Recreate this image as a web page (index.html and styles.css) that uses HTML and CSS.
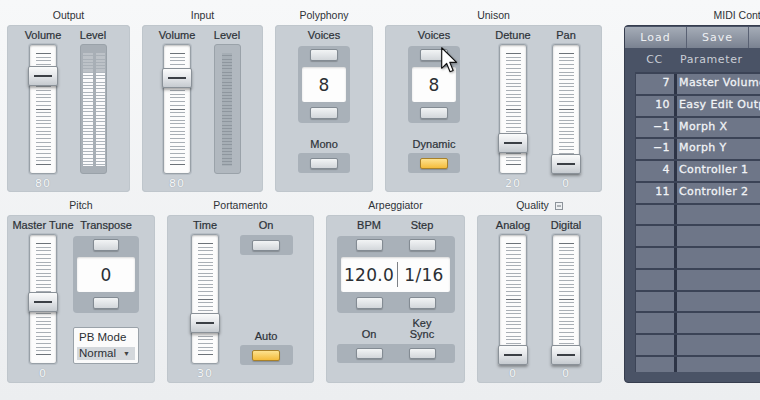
FILE: index.html
```html
<!DOCTYPE html>
<html>
<head>
<meta charset="utf-8">
<link rel="stylesheet" href="styles.css">
</head>
<body>
<div class="app">
  <div class="left">
    <div class="row row-top">
      <section class="sec s-output">
        <h2 class="title">Output</h2>
        <div class="panel p-output">
          <div class="col">
            <div class="lbl">Volume</div>
            <div class="fader"><div class="thumb" style="top:21px"></div></div>
            <div class="val">80</div>
          </div>
          <div class="col">
            <div class="lbl">Level</div>
            <div class="meter meter-out"><div class="mcol"></div><div class="mcol mcol2"></div></div>
          </div>
        </div>
      </section>
      <section class="sec s-input">
        <h2 class="title">Input</h2>
        <div class="panel p-input">
          <div class="col">
            <div class="lbl">Volume</div>
            <div class="fader"><div class="thumb" style="top:23px"></div></div>
            <div class="val">80</div>
          </div>
          <div class="col">
            <div class="lbl">Level</div>
            <div class="meter meter-in"><div class="mcol"></div></div>
          </div>
        </div>
      </section>
      <section class="sec s-poly">
        <h2 class="title">Polyphony</h2>
        <div class="panel p-center">
          <div class="lbl">Voices</div>
          <div class="spin">
            <div class="btn"></div>
            <div class="disp">8</div>
            <div class="btn"></div>
          </div>
          <div class="lbl lbl-gap">Mono</div>
          <div class="grp"><div class="btn btn-s"></div></div>
        </div>
      </section>
      <section class="sec s-unison">
        <h2 class="title">Unison</h2>
        <div class="panel p-unison">
          <div class="col col-60">
            <div class="lbl">Voices</div>
            <div class="spin">
              <div class="btn"></div>
              <div class="disp">8</div>
              <div class="btn"></div>
            </div>
            <div class="lbl lbl-gap">Dynamic</div>
            <div class="grp"><div class="btn btn-s yel"></div></div>
          </div>
          <div class="col ml27">
            <div class="lbl">Detune</div>
            <div class="fader"><div class="thumb" style="top:88px"></div></div>
            <div class="val">20</div>
          </div>
          <div class="col ml9">
            <div class="lbl">Pan</div>
            <div class="fader"><div class="thumb" style="top:109px"></div></div>
            <div class="val">0</div>
          </div>
          <svg class="cursor" width="17" height="27" viewBox="0 0 12 19">
            <path d="M0.5 0.5 L0.5 15 L4 11.6 L6.4 17.4 L8.6 16.5 L6.2 10.8 L11 10.8 Z" fill="#fff" stroke="#111" stroke-width="0.8" stroke-linejoin="round"/>
          </svg>
        </div>
      </section>
    </div>

    <div class="row row-bottom">
      <section class="sec s-pitch">
        <h2 class="title">Pitch</h2>
        <div class="panel p-pitch">
          <div class="col col-60">
            <div class="lbl">Master Tune</div>
            <div class="fader"><div class="thumb" style="top:57px"></div></div>
            <div class="val">0</div>
          </div>
          <div class="col col-66">
            <div class="lbl">Transpose</div>
            <div class="spin spin-66">
              <div class="btn"></div>
              <div class="disp">0</div>
              <div class="btn"></div>
            </div>
            <div class="pb">
              <div class="pb-title">PB Mode</div>
              <div class="pb-sel"><span>Normal</span><span class="tri">&#9660;</span></div>
            </div>
          </div>
        </div>
      </section>
      <section class="sec s-porta">
        <h2 class="title">Portamento</h2>
        <div class="panel p-porta">
          <div class="col">
            <div class="lbl">Time</div>
            <div class="fader"><div class="thumb" style="top:78px"></div></div>
            <div class="val">30</div>
          </div>
          <div class="col col-60 ml9">
            <div class="lbl">On</div>
            <div class="grp grp-on"><div class="btn btn-s"></div></div>
            <div class="lbl lbl-auto">Auto</div>
            <div class="grp"><div class="btn btn-s yel"></div></div>
          </div>
        </div>
      </section>
      <section class="sec s-arp">
        <h2 class="title">Arpeggiator</h2>
        <div class="panel p-center">
          <div class="pair">
            <div class="lbl">BPM</div>
            <div class="lbl">Step</div>
          </div>
          <div class="spin spin-arp">
            <div class="pair pair-btn"><div class="btn"></div><div class="btn"></div></div>
            <div class="disp disp-arp"><span class="half">120.0</span><span class="div"></span><span class="half">1/16</span></div>
            <div class="pair pair-btn"><div class="btn"></div><div class="btn"></div></div>
          </div>
          <div class="pair pair-lbl2">
            <div class="lbl2">On</div>
            <div class="lbl2">Key<br>Sync</div>
          </div>
          <div class="grp grp-arp">
            <div class="btn btn-s"></div>
            <div class="btn btn-s"></div>
          </div>
        </div>
      </section>
      <section class="sec s-quality">
        <h2 class="title title-q">Quality
          <svg class="qicon" width="8" height="8" viewBox="0 0 8 8"><rect x="0.5" y="0.5" width="7" height="7" fill="#eef0f2" stroke="#8c939a"/><line x1="2" y1="4" x2="6" y2="4" stroke="#6d747b"/></svg>
        </h2>
        <div class="panel p-quality">
          <div class="col">
            <div class="lbl">Analog</div>
            <div class="fader"><div class="thumb" style="top:110px"></div></div>
            <div class="val">0</div>
          </div>
          <div class="col ml9">
            <div class="lbl">Digital</div>
            <div class="fader"><div class="thumb" style="top:110px"></div></div>
            <div class="val">0</div>
          </div>
        </div>
      </section>
    </div>
  </div>

  <section class="sec s-midi">
    <h2 class="title">MIDI Control</h2>
    <div class="midi-panel">
      <div class="mbar">
        <div class="mbtn">Load</div>
        <div class="mbtn">Save</div>
        <div class="mbtn"></div>
        <div class="mbtn"></div>
      </div>
      <div class="mhead">
        <div class="mh-cc">CC</div>
        <div class="mh-par">Parameter</div>
      </div>
      <div class="mtable">
        <div class="mrow"><div class="mcc">7</div><div class="mdiv"></div><div class="mpar">Master Volume</div></div>
        <div class="mrow"><div class="mcc">10</div><div class="mdiv"></div><div class="mpar">Easy Edit Output</div></div>
        <div class="mrow"><div class="mcc">&minus;1</div><div class="mdiv"></div><div class="mpar">Morph X</div></div>
        <div class="mrow"><div class="mcc">&minus;1</div><div class="mdiv"></div><div class="mpar">Morph Y</div></div>
        <div class="mrow"><div class="mcc">4</div><div class="mdiv"></div><div class="mpar">Controller 1</div></div>
        <div class="mrow"><div class="mcc">11</div><div class="mdiv"></div><div class="mpar">Controller 2</div></div>
        <div class="mrow"><div class="mcc"></div><div class="mdiv"></div><div class="mpar"></div></div>
        <div class="mrow"><div class="mcc"></div><div class="mdiv"></div><div class="mpar"></div></div>
        <div class="mrow"><div class="mcc"></div><div class="mdiv"></div><div class="mpar"></div></div>
        <div class="mrow"><div class="mcc"></div><div class="mdiv"></div><div class="mpar"></div></div>
        <div class="mrow"><div class="mcc"></div><div class="mdiv"></div><div class="mpar"></div></div>
        <div class="mrow"><div class="mcc"></div><div class="mdiv"></div><div class="mpar"></div></div>
        <div class="mrow"><div class="mcc"></div><div class="mdiv"></div><div class="mpar"></div></div>
        <div class="mrow"><div class="mcc"></div><div class="mdiv"></div><div class="mpar"></div></div>
      </div>
    </div>
  </section>
</div>
</body>
</html>
```

FILE: styles.css
```css
* { box-sizing: border-box; }
html, body { margin: 0; padding: 0; }
body {
  width: 760px;
  height: 400px;
  overflow: hidden;
  background: linear-gradient(#f7f8f9, #eceef0);
  font-family: "Liberation Sans", Arial, sans-serif;
  color: #30353b;
}
.app {
  display: flex;
  gap: 22px;
  padding: 5px 0 0 7px;
  width: 1000px;
}
.left {
  display: flex;
  flex-direction: column;
  gap: 4px;
  width: 595px;
  flex: none;
}
.row { display: flex; gap: 12px; }
.sec { display: flex; flex-direction: column; flex: none; }
.title {
  margin: 0;
  font-weight: normal;
  font-size: 10.5px;
  text-align: center;
  color: #2e3237;
  height: 20px;
  line-height: 20px;
  white-space: nowrap;
}
.row-bottom .title { height: 19px; line-height: 19px; }
.title-q { display: flex; justify-content: center; align-items: center; gap: 6px; }
.qicon { display: block; }

.panel {
  background: #c8ced4;
  border-radius: 4px;
  padding-top: 3px;
  display: flex;
  position: relative;
  box-shadow: inset 0 0 0 1px #bfc6cc;
}
.row-top .panel { height: 167px; }
.row-bottom .panel { height: 168px; }

.s-output { width: 123px; }
.s-input { width: 121px; }
.s-poly { width: 98px; }
.s-unison { width: 217px; }
.s-pitch { width: 148px; }
.s-porta { width: 147px; }
.s-arp { width: 139px; }
.s-quality { width: 125px; }

.p-output { padding-left: 14px; gap: 6px; }
.p-input { padding-left: 13px; gap: 6px; }
.p-center { flex-direction: column; align-items: center; }
.p-unison { padding-left: 19px; }
.p-pitch { padding-left: 6px; }
.p-porta { padding-left: 16px; }
.p-quality { padding-left: 14px; }

.col {
  display: flex;
  flex-direction: column;
  align-items: center;
  width: 44px;
  flex: none;
}
.col-60 { width: 60px; }
.col-66 { width: 66px; }
.ml27 { margin-left: 27px; }
.ml9 { margin-left: 9px; }

.lbl {
  height: 14px;
  line-height: 14px;
  font-size: 11px;
  white-space: nowrap;
  color: #2d3238;
  -webkit-text-stroke: 0.2px #2d3238;
}
.lbl-gap { margin-top: 14px; }
.lbl-auto { margin-top: 74px; }

/* faders */
.fader {
  margin-top: 2px;
  width: 28px;
  height: 130px;
  position: relative;
  background: #fcfcfc;
  border: 1px solid #98a0a7;
  border-radius: 3px;
  box-shadow: inset 0 1px 2px rgba(0,0,0,.25), 0 0 0 1px #b7bec5;
}
.fader::before {
  content: "";
  position: absolute;
  left: 6px;
  width: 15px;
  top: 8px;
  height: 112px;
  background: repeating-linear-gradient(to bottom, #a9afb5 0 1px, transparent 1px 3.7px);
}
.fader::after {
  content: "";
  position: absolute;
  left: 6px;
  width: 15px;
  top: 8px;
  height: 112px;
  background:
    linear-gradient(#6c7278, #6c7278) 0 0 / 100% 1px no-repeat,
    linear-gradient(#6c7278, #6c7278) 0 55.5px / 100% 1px no-repeat,
    linear-gradient(#6c7278, #6c7278) 0 111px / 100% 1px no-repeat;
}
.thumb {
  position: absolute;
  left: -2px;
  width: 30px;
  height: 20px;
  border: 1px solid #8a9198;
  border-radius: 2px;
  background: linear-gradient(#fafbfb, #e6e8eb 45%, #c6cbd0);
  box-shadow: 0 2px 3px rgba(0,0,0,.35);
  z-index: 1;
}
.thumb::after {
  content: "";
  position: absolute;
  left: 5px;
  right: 5px;
  top: 8px;
  height: 2px;
  background: #3b3f45;
}
.val {
  margin-top: 3px;
  height: 14px;
  line-height: 14px;
  font-family: "DejaVu Sans", sans-serif;
  font-size: 11px;
  letter-spacing: 1px;
  color: #f5f7f9;
  text-shadow: 0 0 1px #8b939b;
}

/* meters */
.meter {
  margin-top: 2px;
  width: 27px;
  height: 130px;
  border-radius: 3px;
  border: 1px solid #9aa2a9;
  display: flex;
  padding-top: 8px;
}
.meter-out { background: #a8afb6; gap: 3px; padding-left: 2px; }
.meter-out .mcol {
  width: 10px;
  height: 113px;
  background:
    linear-gradient(to bottom, rgba(168,175,182,.75) 0 19px, transparent 19px),
    repeating-linear-gradient(to bottom, #fbfbfc 0 2.3px, #aeb5bc 2.3px 3.3px);
}
.meter-out .mcol2 { width: 9px; }
.meter-in { background: #b1b8bf; justify-content: center; }
.meter-in .mcol {
  width: 10px;
  height: 113px;
  background: repeating-linear-gradient(to bottom, #a6aeb5 0 2.3px, #8e969e 2.3px 3.3px);
}

/* spinners */
.spin {
  margin-top: 4px;
  width: 52px;
  height: 77px;
  border-radius: 4px;
  background: #a9b1b9;
  display: flex;
  flex-direction: column;
  align-items: center;
  padding-top: 3px;
}
.btn {
  width: 28px;
  height: 12px;
  border: 1px solid #838b93;
  border-radius: 2px;
  background: linear-gradient(#f2f4f5, #d3d7db);
  box-shadow: 0 1px 1px rgba(0,0,0,.2);
  flex: none;
}
.btn-s { height: 11px; }
.yel {
  background: linear-gradient(#fde28f, #f4bc3c);
  border-color: #a8812a;
}
.disp {
  margin: 6px 0 5px;
  width: 44px;
  height: 35px;
  background: #fdfdfd;
  border-radius: 2px;
  display: flex;
  align-items: center;
  justify-content: center;
  font-family: "DejaVu Sans", sans-serif;
  font-size: 17px;
  color: #2b2f34;
  box-shadow: inset 0 1px 2px rgba(0,0,0,.15);
}
.spin-66 { width: 66px; }
.spin-66 .btn { width: 26px; }
.spin-66 .disp { width: 58px; }

.grp {
  margin-top: 2px;
  width: 52px;
  height: 20px;
  border-radius: 3px;
  background: #a9b1b9;
  display: flex;
  align-items: center;
  justify-content: center;
}
.grp-on { margin-top: 3px; width: 53px; }
.p-porta .grp { width: 53px; }

/* pitch bend box */
.pb {
  margin-top: 14px;
  width: 66px;
  height: 37px;
  background: #fbfbfb;
  border: 1px solid #9aa2a9;
  border-radius: 2px;
  padding: 3px;
  font-size: 11.5px;
  color: #2b2f34;
}
.pb-title { height: 12px; line-height: 12px; padding-left: 2px; }
.pb-sel {
  margin-top: 4px;
  height: 13px;
  line-height: 13px;
  background: #d4d8dc;
  display: flex;
  justify-content: space-between;
  padding: 0 5px 0 2px;
}
.tri { font-size: 7px; color: #444; }

/* arpeggiator */
.pair {
  display: grid;
  grid-template-columns: 53px 53px;
  width: 118px;
  justify-content: center;
  justify-items: center;
}
.pair-btn .btn { width: 27px; }
.spin-arp { width: 118px; }
.disp-arp {
  width: 109px;
  display: grid;
  grid-template-columns: 56px 1px 52px;
  align-items: center;
  justify-items: center;
  font-size: 17px;
}
.disp-arp .half { letter-spacing: 0.3px; }
.disp-arp .div { width: 1px; height: 25px; background: #7d8186; }
.pair-lbl2 { margin-top: 5px; height: 22px; align-items: end; }
.lbl2 {
  font-size: 11px;
  line-height: 11px;
  text-align: center;
  color: #2d3238;
  -webkit-text-stroke: 0.2px #2d3238;
}
.grp-arp {
  margin-top: 4px;
  width: 118px;
  height: 19px;
  display: grid;
  grid-template-columns: 53px 53px;
  justify-content: center;
  justify-items: center;
}
.grp-arp .btn { width: 27px; }

/* cursor overlay */
.cursor {
  position: absolute;
  left: 56px;
  top: 22px;
  z-index: 3;
  filter: drop-shadow(1px 1px 1px rgba(0,0,0,.3));
}

/* MIDI control */
.s-midi { width: 238px; }
.midi-panel {
  height: 358px;
  background: #4a5366;
  border: 1px solid #363d4e;
  border-radius: 4px;
  padding-top: 1px;
  overflow: hidden;
}
.mbar { display: flex; height: 21px; }
.mbtn {
  width: 62px;
  height: 21px;
  flex: none;
  background: linear-gradient(#a5acb7, #7a8291);
  border-right: 1px solid #596173;
  color: #eef0f3;
  font-family: "DejaVu Sans", sans-serif;
  font-size: 11px;
  letter-spacing: 1px;
  text-align: center;
  line-height: 21px;
}
.mhead {
  display: flex;
  height: 24px;
  line-height: 24px;
  padding-left: 10px;
  font-family: "DejaVu Sans", sans-serif;
  font-size: 11px;
  letter-spacing: 0.6px;
  color: #c9ced6;
}
.mh-cc { width: 39px; text-align: center; }
.mh-par { padding-left: 6px; }
.mtable {
  margin-left: 10px;
  height: 300px;
  overflow: hidden;
  border-left: 1px solid #3c4457;
}
.mrow {
  display: grid;
  grid-template-columns: 38px 3px 1fr;
  height: 21.75px;
  border-top: 2px solid #3b4356;
  font-family: "DejaVu Sans", sans-serif;
  font-size: 11px;
  letter-spacing: 0.4px;
  line-height: 17px;
  color: #f1f3f6;
  -webkit-text-stroke: 0.3px #f1f3f6;
}
.mcc { background: #6e7688; text-align: right; padding-right: 4px; }
.mdiv { background: #2d3446; }
.mpar { background: #6e7688; padding-left: 2px; white-space: nowrap; overflow: hidden; }
```
